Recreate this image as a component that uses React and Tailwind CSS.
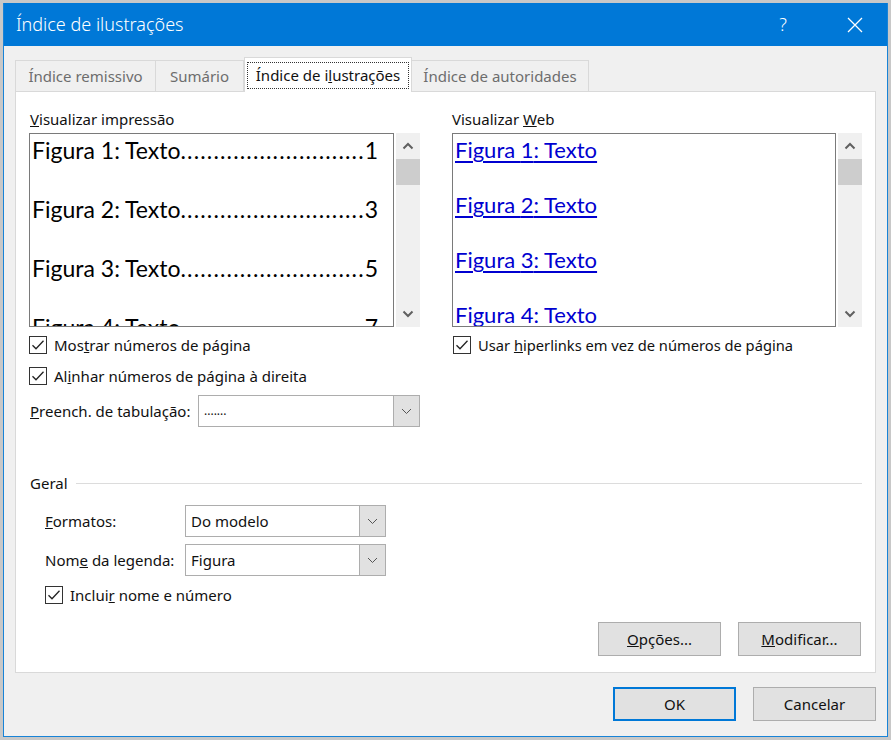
import React from "react";

const ui = { fontFamily: '"Noto Sans", "Open Sans", sans-serif' };
const cal = { fontFamily: 'Lato, "Noto Sans", sans-serif' };

const Check = () => (
  <span className="w-[18px] h-[18px] border border-[#333] bg-white flex items-center justify-center shrink-0">
    <svg width="14" height="14" viewBox="0 0 14 14">
      <path d="M1.5 7.2 L5 10.8 L12.5 2.8" fill="none" stroke="#222" strokeWidth="1.3" />
    </svg>
  </span>
);

const Chevron = ({ up }) => (
  <svg width="12" height="8" viewBox="0 0 12 8">
    <path d={up ? "M1.5 6.5 L6 2 L10.5 6.5" : "M1.5 1.5 L6 6 L10.5 1.5"} fill="none" stroke="#606060" strokeWidth="2" />
  </svg>
);

const Scrollbar = () => (
  <div className="w-[24px] h-full bg-[#f0f0f0] flex flex-col items-center">
    <div className="h-[26px] flex items-center justify-center"><Chevron up /></div>
    <div className="w-[24px] h-[26px] bg-[#cdcdcd]" />
    <div className="flex-1" />
    <div className="h-[26px] flex items-center justify-center"><Chevron /></div>
  </div>
);

const Select = ({ value, width, small }) => (
  <div className={`${width} h-[32px] border border-[#adadad] bg-white flex items-stretch`}>
    <div className={`flex-1 flex items-center pl-[5px] text-[#111] ${small ? "text-[12px]" : "text-[15px]"}`}>{value}</div>
    <div className="w-[26px] bg-[#e1e1e1] border-l border-[#adadad] flex items-center justify-center">
      <svg width="11" height="7" viewBox="0 0 11 7">
        <path d="M1 1 L5.5 5.5 L10 1" fill="none" stroke="#555" strokeWidth="1" />
      </svg>
    </div>
  </div>
);

const Button = ({ children, primary }) => (
  <button
    className={`w-[123px] h-[34px] bg-[#e1e1e1] text-[15px] text-[#111] ${
      primary ? "border-2 border-[#0078d7]" : "border border-[#adadad]"
    }`}
  >
    {children}
  </button>
);

const PrintLine = ({ n, page }) => (
  <div className="h-[30px] mb-[29px] text-[23px] leading-[30px] text-black whitespace-nowrap" style={cal}>
    Figura {n}: Texto<span className="tracking-[1.15px]">............................</span>{page}
  </div>
);

const WebLine = ({ n }) => (
  <div className="h-[30px] mb-[25px] leading-[30px] text-[22px]" style={cal}>
    <span className="text-[#0000d0] underline underline-offset-[3px] decoration-[1.5px]">Figura {n}: Texto</span>
  </div>
);

export default function App() {
  return (
    <div className="w-[891px] h-[740px] bg-[#c8c8c8] pt-[3px] pl-[3px] overflow-hidden" style={ui}>
      <div className="w-[885px] h-[734px] border border-[#1883d7] border-t-0 bg-[#f0f0f0] flex flex-col">
        {/* title bar */}
        <div className="h-[43px] bg-[#0078d7] text-white flex items-center pl-[12px] pr-[24px] shrink-0">
          <span className="text-[18px] font-light flex-1">Índice de ilustrações</span>
          <span className="text-[18px] font-light mr-[60px]">?</span>
          <svg width="16" height="16" viewBox="0 0 16 16">
            <path d="M1 1 L15 15 M15 1 L1 15" stroke="white" strokeWidth="1.3" />
          </svg>
        </div>

        {/* tabs */}
        <div className="flex items-end h-[34px] mt-[11px] ml-[11px] text-[15px]">
          <div className="h-[31px] w-[141px] border border-[#d9d9d9] border-b-0 flex items-center justify-center text-[#6d6d6d]">Índice remissivo</div>
          <div className="h-[31px] w-[88px] border border-[#d9d9d9] border-b-0 border-l-0 flex items-center justify-center text-[#6d6d6d]">Sumário</div>
          <div className="h-[35px] w-[168px] -mb-[1px] bg-white border border-[#d9d9d9] border-b-0 z-10 flex items-center justify-center px-[3px]">
            <span className="block border border-dotted border-[#333] px-[8px] h-[27px] leading-[25px] whitespace-nowrap text-[#111]">
              Índice de i<u>l</u>ustrações
            </span>
          </div>
          <div className="h-[31px] w-[177px] border border-[#d9d9d9] border-b-0 border-l-0 flex items-center justify-center text-[#6d6d6d]">Índice de autoridades</div>
        </div>

        {/* panel */}
        <div className="ml-[11px] w-[861px] h-[582px] bg-white border border-[#d9d9d9] pt-[13px] px-[13px] flex flex-col text-[15px] text-[#111]">
          <div className="flex h-[361px]">
            {/* left column */}
            <div className="w-[392px] pt-[4px]">
              <div className="h-[20px] leading-[20px] pl-[1px]"><u>V</u>isualizar impressão</div>
              <div className="flex h-[194px] mt-[4px] gap-[2px]">
                <div className="w-[365px] h-full border border-[#7a7a7a] overflow-hidden pl-[2px] pt-[1px]">
                  <PrintLine n={1} page={1} />
                  <PrintLine n={2} page={3} />
                  <PrintLine n={3} page={5} />
                  <PrintLine n={4} page={7} />
                </div>
                <Scrollbar />
              </div>
              <div className="flex items-center gap-[7px] mt-[9px] h-[18px]">
                <Check />
                <span>Mos<u>t</u>rar números de página</span>
              </div>
              <div className="flex items-center gap-[7px] mt-[13px] h-[18px]">
                <Check />
                <span>Al<u>i</u>nhar números de página à direita</span>
              </div>
              <div className="flex items-center mt-[10px] h-[32px]">
                <span className="w-[169px] pl-[1px]"><u>P</u>reench. de tabulação:</span>
                <Select value="......." width="w-[222px]" small />
              </div>
            </div>

            <div className="w-[1px] bg-[#a0a0a0] mx-[16px] h-[361px]" />

            {/* right column */}
            <div className="w-[410px] pt-[4px]">
              <div className="h-[20px] leading-[20px]">Visualizar <u>W</u>eb</div>
              <div className="flex h-[194px] mt-[4px] gap-[2px]">
                <div className="w-[384px] h-full border border-[#7a7a7a] overflow-hidden pl-[2px] pt-[1px]">
                  <WebLine n={1} />
                  <WebLine n={2} />
                  <WebLine n={3} />
                  <WebLine n={4} />
                </div>
                <Scrollbar />
              </div>
              <div className="flex items-center gap-[7px] mt-[9px] h-[18px] pl-[1px]">
                <Check />
                <span className="text-[14.7px]">Usar <u>h</u>iperlinks em vez de números de página</span>
              </div>
            </div>
          </div>

          {/* Geral */}
          <div className="flex items-center mt-[8px] h-[18px]">
            <span className="pl-[1px] pr-[8px]">Geral</span>
            <div className="flex-1 h-[1px] bg-[#dcdcdc]" />
          </div>
          <div className="pl-[16px]">
            <div className="flex items-center mt-[13px] h-[32px]">
              <span className="w-[140px]"><u>F</u>ormatos:</span>
              <Select value="Do modelo" width="w-[201px]" />
            </div>
            <div className="flex items-center mt-[7px] h-[32px]">
              <span className="w-[140px]">Nom<u>e</u> da legenda:</span>
              <Select value="Figura" width="w-[201px]" />
            </div>
            <div className="flex items-center gap-[7px] mt-[10px] h-[18px]">
              <Check />
              <span>Inclui<u>r</u> nome e número</span>
            </div>
          </div>
          <div className="flex justify-end gap-[17px] mt-[18px] pr-[1px]">
            <Button><u>O</u>pções...</Button>
            <Button><u>M</u>odificar...</Button>
          </div>
        </div>

        {/* footer */}
        <div className="flex justify-end gap-[17px] mt-[14px] w-[872px]">
          <Button primary>OK</Button>
          <Button>Cancelar</Button>
        </div>
      </div>
    </div>
  );
}
